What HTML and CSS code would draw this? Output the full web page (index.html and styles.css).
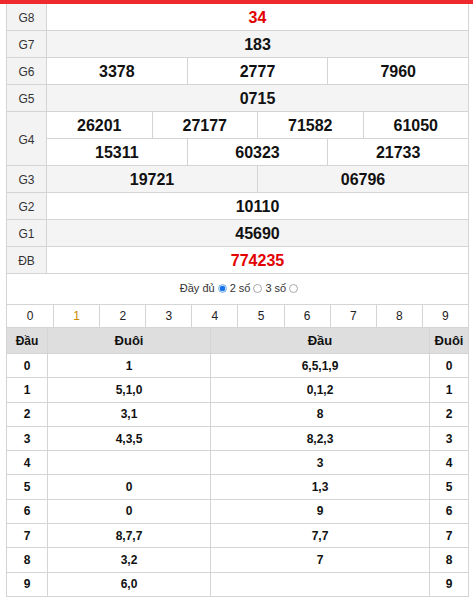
FILE: index.html
```html
<!DOCTYPE html>
<html lang="vi">
<head>
<meta charset="utf-8">
<title>Kết quả xổ số</title>
<link rel="stylesheet" href="styles.css">
</head>
<body>
<div class="topbar"></div>
<div class="wrap">
  <div class="kq">
    <div class="row"><div class="lbl">G8</div><div class="vals"><div class="v red">34</div></div></div>
    <div class="row alt"><div class="lbl">G7</div><div class="vals"><div class="v">183</div></div></div>
    <div class="row"><div class="lbl">G6</div><div class="vals"><div class="v">3378</div><div class="v">2777</div><div class="v">7960</div></div></div>
    <div class="row alt"><div class="lbl">G5</div><div class="vals"><div class="v">0715</div></div></div>
    <div class="row tall"><div class="lbl">G4</div>
      <div class="stack">
        <div class="vals sub"><div class="v">26201</div><div class="v">27177</div><div class="v">71582</div><div class="v">61050</div></div>
        <div class="vals"><div class="v">15311</div><div class="v">60323</div><div class="v">21733</div></div>
      </div>
    </div>
    <div class="row alt"><div class="lbl">G3</div><div class="vals"><div class="v">19721</div><div class="v">06796</div></div></div>
    <div class="row"><div class="lbl">G2</div><div class="vals"><div class="v">10110</div></div></div>
    <div class="row alt"><div class="lbl">G1</div><div class="vals"><div class="v">45690</div></div></div>
    <div class="row"><div class="lbl">ĐB</div><div class="vals"><div class="v red">774235</div></div></div>
  </div>

  <div class="opt">
    <span>Đầy đủ</span><span class="radio on"></span><span>2 số</span><span class="radio"></span><span>3 số</span><span class="radio"></span>
  </div>

  <div class="digits">
    <div>0</div><div class="hl">1</div><div>2</div><div>3</div><div>4</div><div>5</div><div>6</div><div>7</div><div>8</div><div>9</div>
  </div>

  <div class="loto">
    <div class="lr head"><div>Đầu</div><div>Đuôi</div><div>Đầu</div><div>Đuôi</div></div>
    <div class="lr"><div>0</div><div>1</div><div>6,5,1,9</div><div>0</div></div>
    <div class="lr"><div>1</div><div>5,1,0</div><div>0,1,2</div><div>1</div></div>
    <div class="lr"><div>2</div><div>3,1</div><div>8</div><div>2</div></div>
    <div class="lr"><div>3</div><div>4,3,5</div><div>8,2,3</div><div>3</div></div>
    <div class="lr"><div>4</div><div></div><div>3</div><div>4</div></div>
    <div class="lr"><div>5</div><div>0</div><div>1,3</div><div>5</div></div>
    <div class="lr"><div>6</div><div>0</div><div>9</div><div>6</div></div>
    <div class="lr"><div>7</div><div>8,7,7</div><div>7,7</div><div>7</div></div>
    <div class="lr"><div>8</div><div>3,2</div><div>7</div><div>8</div></div>
    <div class="lr"><div>9</div><div>6,0</div><div></div><div>9</div></div>
  </div>
</div>
</body>
</html>
```

FILE: styles.css
```css
* { box-sizing: border-box; }

body {
  margin: 0;
  background: #fff;
  font-family: "Liberation Sans", Arial, sans-serif;
  color: #222;
}

.topbar {
  height: 4px;
  background: #ee2a2e;
}

.wrap {
  margin-left: 6px;
  width: 463px;
  border-left: 1px solid #d4d4d4;
  border-right: 1px solid #d4d4d4;
}

/* results table */
.row {
  display: flex;
  height: 27px;
  border-bottom: 1px solid #d4d4d4;
}
.row.tall { height: 54px; }
.row.alt .vals { background: #f4f4f4; }

.lbl {
  width: 40px;
  flex: none;
  border-right: 1px solid #d4d4d4;
  background: #f3f3f3;
  display: flex;
  align-items: center;
  justify-content: center;
  padding-top: 2px;
  font-size: 12px;
  color: #333;
}

.stack {
  flex: 1;
  display: flex;
  flex-direction: column;
}
.stack .vals { flex: 1; }
.vals.sub { border-bottom: 1px solid #d4d4d4; }

.vals {
  flex: 1;
  display: flex;
}
.v {
  flex: 1 1 0;
  display: flex;
  align-items: center;
  justify-content: center;
  padding-top: 2px;
  font-size: 16px;
  font-weight: bold;
  color: #111;
}
.v + .v { border-left: 1px solid #d4d4d4; }
.v.red { color: #e30000; }

/* options */
.opt {
  height: 30px;
  display: flex;
  align-items: center;
  justify-content: center;
  gap: 2px;
  font-size: 11px;
  color: #333;
  padding-bottom: 2px;
  padding-left: 4px;
}
.radio {
  width: 9px;
  height: 9px;
  border-radius: 50%;
  border: 1px solid #a8a8a8;
  background: #fff;
  margin: 0 1px;
}
.radio.on {
  border-color: #7fb2e5;
  background: radial-gradient(circle, #1a73e8 0 2.6px, #cfe2f7 3px);
}

/* digits */
.digits {
  display: grid;
  grid-template-columns: repeat(10, 1fr);
  height: 23px;
  border-top: 1px solid #d4d4d4;
}
.digits div {
  display: flex;
  align-items: center;
  justify-content: center;
  font-size: 12px;
  color: #222;
}
.digits div + div { border-left: 1px solid #d4d4d4; }
.digits .hl { color: #c98a00; }

/* loto */
.loto { border-top: 1px solid #d4d4d4; }
.lr {
  display: grid;
  grid-template-columns: 40px 163px 219px 1fr;
  height: 24.3px;
  border-bottom: 1px solid #d4d4d4;
}
.lr div {
  display: flex;
  align-items: center;
  justify-content: center;
  font-size: 12px;
  font-weight: bold;
  color: #111;
}
.lr div + div { border-left: 1px solid #d4d4d4; }
.lr.head {
  height: 26px;
  background: #dedede;
}
.lr.head div { font-size: 13px; font-weight: bold; }
.lr.head div:first-child { font-size: 12px; }
```
